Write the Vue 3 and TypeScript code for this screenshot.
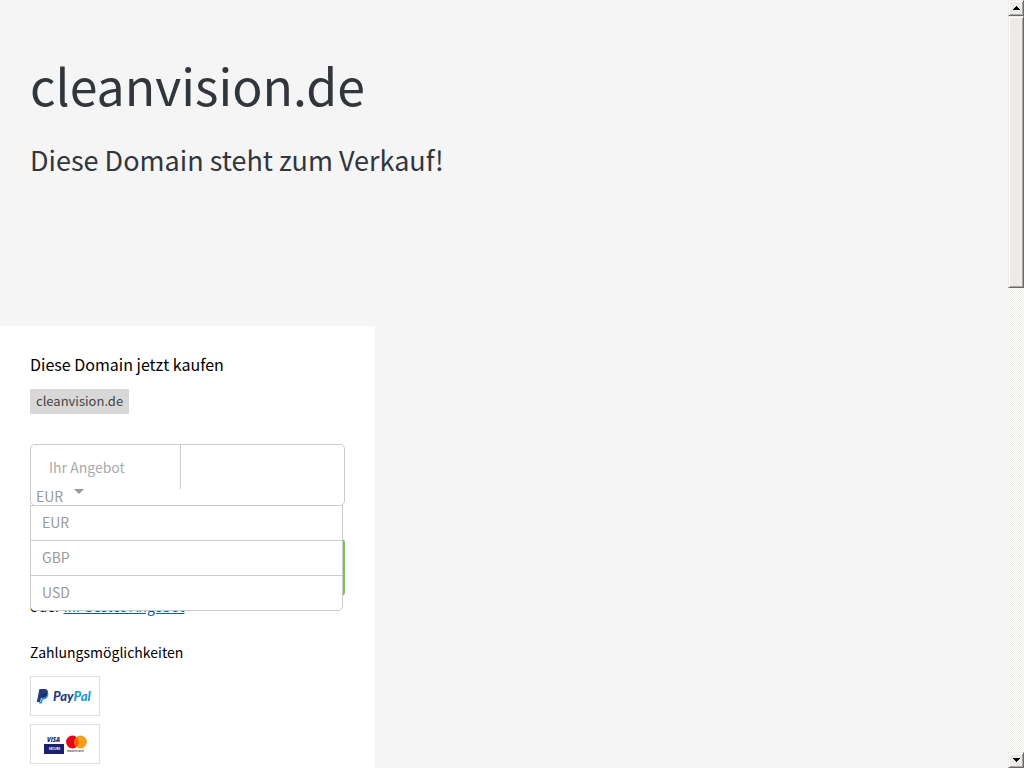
<script setup lang="ts">
import { ref } from 'vue'

const domain = 'cleanvision.de'
const currencies = ['EUR', 'GBP', 'USD']
const currency = ref('EUR')
const open = ref(true)
const offer = ref('')

function choose(value: string) {
  currency.value = value
  open.value = false
}
</script>

<template>
  <div class="window">
    <div class="page">
      <header class="hero">
        <h1>{{ domain }}</h1>
        <h2>Diese Domain steht zum Verkauf!</h2>
      </header>

      <main class="card">
        <h3>Diese Domain jetzt kaufen</h3>
        <span class="tag">{{ domain }}</span>

        <form @submit.prevent>
          <div class="offer">
            <input v-model="offer" type="text" placeholder="Ihr Angebot" aria-label="Ihr Angebot" />
            <button
              type="button"
              class="currency"
              aria-label="Währung"
              aria-haspopup="listbox"
              :aria-expanded="open"
              @click="open = !open"
            >
              <span>{{ currency }}</span>
              <svg width="10" height="5" viewBox="0 0 10 5" aria-hidden="true">
                <path d="M0 0H10L5 5Z" fill="#999" />
              </svg>
            </button>
            <ul v-if="open" class="options" role="listbox">
              <li v-for="c in currencies" :key="c" role="option" :aria-selected="c === currency">
                <button type="button" @click="choose(c)">{{ c }}</button>
              </li>
            </ul>
          </div>
          <button type="submit" class="submit" aria-label="Angebot senden"></button>
        </form>

        <p class="alternative">oder <a href="#">Ihr bestes Angebot</a></p>

        <h4>Zahlungsmöglichkeiten</h4>
        <ul class="payments">
          <li>
            <svg viewBox="0 0 68 38" role="img" aria-label="PayPal">
              <path d="M8.4 12H13.5C16.4 12 17.4 14 16.8 16.5C16.2 19.5 14.2 20.8 11.5 20.8H10L9.2 25H5.8Z" fill="#253b80" />
              <path d="M16.6 15C17.6 16 17.5 17.5 17 19C16.4 21.3 14.8 22.4 12.5 22.4H11.8L11 26.5H8L8.5 24.8H9.9L10.7 20.8H12C14.6 20.8 16.2 18.8 16.6 15Z" fill="#179bd7" />
              <path d="M10.2 20.8L10.8 17H13L16.5 15.2C16.1 19 14.2 20.8 11.5 20.8Z" fill="#222d65" />
              <text x="22" y="24" class="paypal"><tspan fill="#253b80">Pay</tspan><tspan fill="#179bd7">Pal</tspan></text>
            </svg>
          </li>
          <li>
            <svg viewBox="0 0 68 38" role="img" aria-label="Visa, Mastercard">
              <text x="16" y="17" class="visa">VISA</text>
              <rect x="13" y="19" width="20" height="10" fill="#1a1f71" />
              <text x="18" y="25" class="secure">SECURE</text>
              <circle cx="41.5" cy="17" r="6.4" fill="#eb001b" />
              <circle cx="49.5" cy="17" r="6.4" fill="#f79e1b" />
              <path d="M45.5 12A6.4 6.4 0 0 1 45.5 22A6.4 6.4 0 0 1 45.5 12Z" fill="#ff5f00" />
              <text x="36" y="27" class="mastercard">mastercard</text>
            </svg>
          </li>
        </ul>
      </main>
    </div>

    <div class="scrollbar" aria-hidden="true">
      <button type="button" tabindex="-1">
        <svg width="7" height="4" viewBox="0 0 7 4" shape-rendering="crispEdges">
          <path d="M3 0H4V1H5V2H6V3H7V4H0V3H1V2H2V1H3Z" />
        </svg>
      </button>
      <div class="track"><div class="thumb"></div></div>
      <button type="button" tabindex="-1">
        <svg width="7" height="4" viewBox="0 0 7 4" shape-rendering="crispEdges">
          <path d="M0 0H7V1H6V2H5V3H4V4H3V3H2V2H1V1H0Z" />
        </svg>
      </button>
    </div>
  </div>
</template>

<style>
body {
  margin: 0;
  background: #f5f5f5;
}
</style>

<style scoped>
.window {
  display: flex;
  height: 100vh;
  overflow: hidden;
  font-family: "Noto Sans CJK SC", "Noto Sans", sans-serif;
  color: #000;
}
.window * {
  box-sizing: border-box;
}
h1, h2, h3, h4, p, ul {
  margin: 0;
  padding: 0;
  font-weight: 400;
  list-style: none;
}
button, input {
  font: inherit;
  margin: 0;
  padding: 0;
  border: 0;
  background: none;
}
.page {
  flex: 1;
  min-width: 0;
  overflow: hidden;
}
.hero {
  padding: 52px 30px 146px;
  color: #31363c;
}
h1 {
  font-size: 50px;
  line-height: 64px;
}
h2 {
  margin-top: 24px;
  font-size: 27px;
  line-height: 40px;
}
.card {
  max-width: 375px;
  padding: 26px 30px 30px;
  background: #fff;
}
h3 {
  font-size: 16px;
  line-height: 24px;
}
.tag {
  display: block;
  width: fit-content;
  margin-top: 13px;
  padding: 0 6px 1px;
  background: #d8d8d8;
  color: #444;
  font-size: 13px;
  line-height: 24px;
}
form {
  margin-top: 30px;
}
.offer {
  position: relative;
  height: 62px;
  border: 1px solid #ccc;
  border-radius: 5px;
  font-size: 14px;
  color: #999;
}
.offer input {
  display: block;
  width: 150px;
  height: 44px;
  padding: 0 18px;
  border-right: 1px solid #ccc;
  color: #555;
}
.offer input::placeholder {
  color: #aaa;
  opacity: 1;
}
.currency {
  display: flex;
  gap: 11px;
  padding-left: 5px;
  line-height: 14px;
  color: #999;
}
.options {
  position: absolute;
  top: 60px;
  left: -1px;
  right: 1px;
  border: 1px solid #ccc;
  border-radius: 0 0 5px 5px;
  background: #fff;
}
.options li + li {
  border-top: 1px solid #ccc;
}
.options button {
  display: block;
  width: 100%;
  padding: 0 11px 2px;
  text-align: left;
  line-height: 32px;
  color: #999;
}
.submit {
  display: block;
  width: 100%;
  height: 57px;
  margin-top: 33px;
  border-radius: 4px;
  background: #7dbf50;
}
.alternative {
  font-size: 14px;
  line-height: 21px;
}
.alternative a {
  color: #0a5aa8;
}
h4 {
  margin-top: 23px;
  font-size: 14px;
  line-height: 24px;
}
.payments {
  display: grid;
  gap: 8px;
  margin-top: 12px;
}
.payments li {
  width: 70px;
  height: 40px;
  border: 1px solid #ddd;
}
.payments svg {
  display: block;
}
.paypal {
  font: italic 900 13px Lato, sans-serif;
}
.visa {
  font: italic 800 6px "Open Sans", sans-serif;
  fill: #1a1f71;
}
.secure {
  font: 700 3px "Open Sans", sans-serif;
  fill: #fff;
}
.mastercard {
  font: 600 3px "Open Sans", sans-serif;
  fill: #333;
}
.scrollbar {
  display: flex;
  flex-direction: column;
  width: 16px;
  background: repeating-conic-gradient(#fff 0 25%, #edebe7 0 50%) 0 0 / 2px 2px;
}
.scrollbar button,
.thumb {
  background: #edebe7;
  border: 1px solid #edebe7;
  border-right-color: #696969;
  border-bottom-color: #696969;
  box-shadow: inset 1px 1px #fff, inset -1px -1px #a9a7a3;
}
.scrollbar button {
  display: flex;
  align-items: center;
  justify-content: center;
  height: 16px;
}
.track {
  flex: 1;
}
.thumb {
  height: 37%;
}
</style>
